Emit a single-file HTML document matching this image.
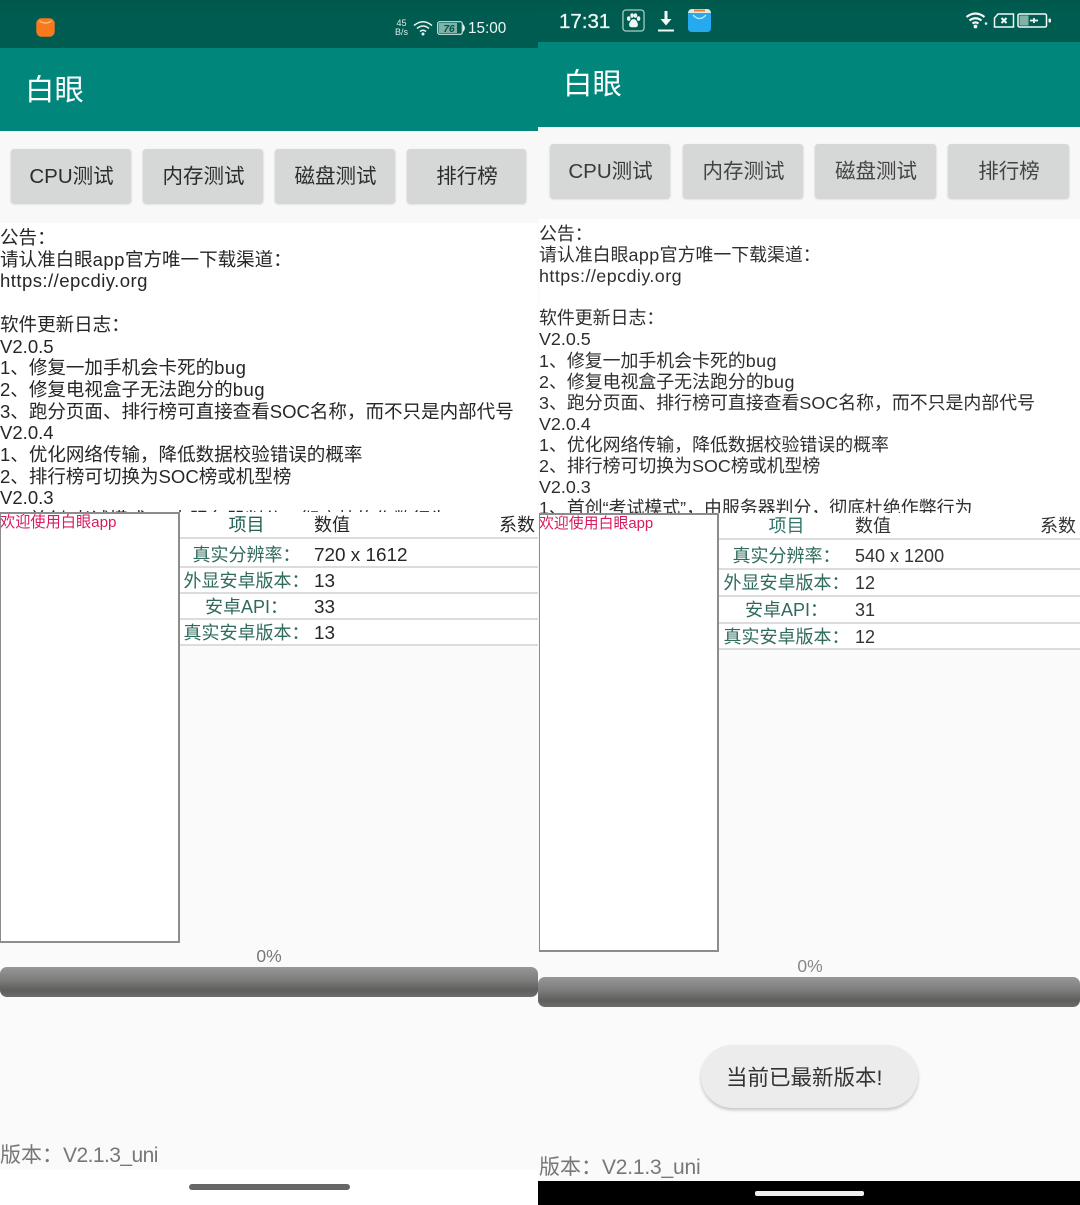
<!DOCTYPE html>
<html lang="zh">
<head>
<meta charset="utf-8">
<title>白眼</title>
<style>
html,body{margin:0;padding:0;width:1080px;height:1205px;overflow:hidden;background:#fafafa}
*{box-sizing:border-box}
body{position:relative;font-family:"Liberation Sans","Noto Sans CJK SC",sans-serif}
.a{position:absolute;white-space:nowrap}
.status{background:linear-gradient(#00584c,#005c50 30%,#005c50)}
.appbar{background:#00867a}
.title{color:#fff;font-size:29.500px;line-height:36px}
.btn{position:absolute;background:#d6d7d7;border-radius:3px;box-shadow:0 1px 2px rgba(0,0,0,.2);color:#2c2c2c;text-align:center;white-space:nowrap;height:54px;font-size:20.500px;line-height:56px;padding-left:1px}
.txt{position:absolute;overflow:hidden;background:#fff;color:#262626;white-space:pre}
.txt i{font-style:normal;letter-spacing:.45px}
.log{position:absolute;background:#fff;border:2px solid #8c8c8c;border-left-width:1px;color:#d81b60;overflow:hidden;white-space:nowrap;text-indent:-1px}
.rule{position:absolute;height:2px;background:#dcdcdc}
.rowbg{position:absolute;background:#fff}
.lab{position:absolute;text-align:center;color:#2f6a5d;white-space:nowrap;width:133px;font-size:18px;line-height:24px}
.val{position:absolute;color:#262626;white-space:nowrap;line-height:24px}
.prog{position:absolute;height:30px;border-radius:7px;background:linear-gradient(#979797 0,#7f7f7f 40%,#5d5f5c 78%,#6c6c6c 100%)}
.pct{position:absolute;color:#777;font-size:17.500px;line-height:20px;text-align:center}
.ver{position:absolute;color:#777;font-size:21px;line-height:28px;white-space:nowrap}
</style>
</head>
<body>

<!-- LEFT PHONE -->
<div class="a status" style="left:0;top:0;width:538px;height:48px"></div>
<div class="a appbar" style="left:0;top:48px;width:538px;height:83px"></div>
<svg class="a" style="left:36px;top:18px" width="19" height="19" viewBox="0 0 19 19"><rect x=".3" y=".3" width="18.400" height="18.400" rx="5" fill="#f97a1c"/><path d="M3.500 3q6 4 12 0" fill="none" stroke="#ffc48a" stroke-width="1.300"/></svg>
<div class="a" style="left:395px;top:19px;font-size:9px;line-height:9px;color:#dbeee9;text-align:center">45<br>B/s</div>
<svg class="a" style="left:413px;top:20px" width="20" height="16" viewBox="0 0 20 16" fill="none" stroke="#e6f4f0" stroke-width="1.500"><path d="M1 5.500q9-7.500 18 0M4 8.500q6-5 12 0M7 11.500q3-2.500 6 0"/><circle cx="10" cy="14" r="1.500" fill="#e6f4f0" stroke="none"/></svg>
<svg class="a" style="left:437px;top:21px" width="29" height="14" viewBox="0 0 29 14"><rect x=".7" y=".7" width="24.600" height="12.600" rx="2" fill="none" stroke="#cfe6e0" stroke-width="1.200"/><rect x="2" y="2" width="18" height="10" fill="#7fb3a8"/><path d="M26.500 4.500q1.800 2.500 0 5z" fill="#e6f4f0" stroke="#e6f4f0"/><text x="12" y="11" font-size="10" font-weight="bold" font-style="italic" fill="#004f44" text-anchor="middle" font-family="Liberation Sans">76</text></svg>
<div class="a" style="left:468px;top:19px;font-size:15.300px;line-height:19px;color:#eef7f5">15:00</div>
<div class="a title" style="left:25px;top:73px">白眼</div>

<div class="a" style="left:0;top:131px;width:538px;height:92px;background:#f8f8f8"></div>
<div class="btn" style="left:11px;top:149px;width:120px">CPU测试</div>
<div class="btn" style="left:143px;top:149px;width:120px">内存测试</div>
<div class="btn" style="left:275px;top:149px;width:120px">磁盘测试</div>
<div class="btn" style="left:407px;top:149px;width:119px">排行榜</div>

<div class="txt" style="left:0;top:223px;width:538px;height:289px;padding-top:4px;font-size:18.550px;line-height:21.700px">公告：
请认准白眼<i>app</i>官方唯一下载渠道：
<i>https://epcdiy.org</i>

软件更新日志：
V2.0.5
1、修复一加手机会卡死的<i>bug</i>
2、修复电视盒子无法跑分的<i>bug</i>
3、跑分页面、排行榜可直接查看SOC名称，而不只是内部代号
V2.0.4
1、优化网络传输，降低数据校验错误的概率
2、排行榜可切换为SOC榜或机型榜
V2.0.3
1、首创“考试模式”，由服务器判分，彻底杜绝作弊行为</div>

<div class="log" style="left:0;top:512px;width:180px;height:431px;font-size:15.200px;line-height:18px">欢迎使用白眼app</div>

<div class="rowbg" style="left:180px;top:512px;width:358px;height:133px"></div>
<div class="lab" style="left:180px;top:513px;color:#245f53">项目</div>
<div class="val" style="left:314px;top:513px;font-size:18px">数值</div>
<div class="val" style="left:499px;top:513px;font-size:18px">系数</div>
<div class="rule" style="left:180px;top:537px;width:358px"></div>
<div class="lab" style="left:180px;top:543px">真实分辨率：</div>
<div class="val" style="left:314px;top:544px;font-size:18.900px">720 x 1612</div>
<div class="rule" style="left:180px;top:566px;width:358px"></div>
<div class="lab" style="left:180px;top:569px">外显安卓版本：</div>
<div class="val" style="left:314px;top:570px;font-size:18.900px">13</div>
<div class="rule" style="left:180px;top:592px;width:358px"></div>
<div class="lab" style="left:180px;top:595px">安卓API：</div>
<div class="val" style="left:314px;top:596px;font-size:18.900px">33</div>
<div class="rule" style="left:180px;top:618px;width:358px"></div>
<div class="lab" style="left:180px;top:621px">真实安卓版本：</div>
<div class="val" style="left:314px;top:622px;font-size:18.900px">13</div>
<div class="rule" style="left:180px;top:644px;width:358px"></div>

<div class="pct" style="left:0;top:946px;width:538px">0%</div>
<div class="prog" style="left:0;top:967px;width:538px"></div>
<div class="ver" style="left:0;top:1142px">版本：<span style="letter-spacing:-.55px">V2.1.3_uni</span></div>
<div class="a" style="left:0;top:1170px;width:538px;height:35px;background:#fff"></div>
<div class="a" style="left:189px;top:1184px;width:161px;height:6px;border-radius:3px;background:#666"></div>

<!-- RIGHT PHONE -->
<div class="a status" style="left:538px;top:0;width:542px;height:42px"></div>
<div class="a appbar" style="left:538px;top:42px;width:542px;height:85px"></div>
<div class="a" style="left:559px;top:10px;font-size:20.500px;line-height:24px;color:#eef7f5;-webkit-text-stroke:.3px #eef7f5">17:31</div>
<svg class="a" style="left:622px;top:9px" width="23" height="23" viewBox="0 0 24 24"><rect x="1" y="1" width="22" height="22" rx="3" fill="none" stroke="#a9d0c8" stroke-width="1.300"/><g fill="#eef7f5"><ellipse cx="7" cy="10" rx="1.800" ry="2.400"/><ellipse cx="10.500" cy="6.800" rx="1.800" ry="2.400"/><ellipse cx="14" cy="6.800" rx="1.800" ry="2.400"/><ellipse cx="17.300" cy="10" rx="1.800" ry="2.400"/><path d="M12 10.500q3 0 4.500 5 .5 3.500-2.500 3.500h-4q-3 0-2.500-3.500 1.500-5 4.500-5z"/></g></svg>
<svg class="a" style="left:657px;top:10px" width="18" height="23" viewBox="0 0 18 23"><path d="M7.500 1h3v8h4l-5.500 6.500L3.500 9h4z" fill="#f2f9f7"/><rect x="1" y="19.500" width="16" height="2" fill="#f2f9f7"/></svg>
<svg class="a" style="left:687px;top:8px" width="25" height="25" viewBox="0 0 25 25"><path d="M5 1h15q4 0 4 4v15q0 4-4 4H5q-4 0-4-4V5q0-4 4-4z" fill="#25aaf0"/><path d="M5 1h15q3 0 4 4H1q1-4 4-4z" fill="#e9e5d8"/><path d="M7 1.500h11v2H7z" fill="#ee7a3a"/><path d="M6 7q6.500 7 13 0" fill="none" stroke="#bfe6fb" stroke-width="1.300"/></svg>
<svg class="a" style="left:965px;top:11px" width="24" height="18" viewBox="0 0 24 18" fill="none" stroke="#f2f9f7" stroke-width="2.200"><path d="M1.500 6q9-7 18 0M4.500 9.500q6-4.500 12 0M7.500 12.500q3-2.200 6 0"/><circle cx="10.500" cy="15.500" r="1.900" fill="#f2f9f7" stroke="none"/><circle cx="21" cy="12.500" r="1.300" fill="#f2f9f7" stroke="none"/></svg>
<svg class="a" style="left:993px;top:13px" width="22" height="15" viewBox="0 0 22 15"><path d="M5 1h15.500v13H1.500V5z" fill="none" stroke="#f2f9f7" stroke-width="1.500"/><path d="M8.500 5l5 5M13.500 5l-5 5" stroke="#f2f9f7" stroke-width="2"/></svg>
<svg class="a" style="left:1017px;top:13px" width="35" height="15" viewBox="0 0 35 15"><rect x="1" y="1" width="28.500" height="13" rx="1.500" fill="none" stroke="#f2f9f7" stroke-width="1.500"/><rect x="2.500" y="2.500" width="9" height="10" fill="#7fb3a8"/><path d="M13 7.500h8M17 5v5" stroke="#f2f9f7" stroke-width="1.700"/><rect x="31.500" y="5.500" width="2.500" height="4" rx="1" fill="#f2f9f7"/></svg>
<div class="a title" style="left:563px;top:67px">白眼</div>

<div class="a" style="left:538px;top:127px;width:542px;height:92px;background:#f8f8f8"></div>
<div class="btn" style="left:550px;top:144px;width:120px;color:#3a3a3a">CPU测试</div>
<div class="btn" style="left:683px;top:144px;width:120px;color:#444">内存测试</div>
<div class="btn" style="left:815px;top:144px;width:121px;color:#444">磁盘测试</div>
<div class="btn" style="left:948px;top:144px;width:121px;color:#444">排行榜</div>

<div class="txt" style="left:539px;top:219px;width:541px;height:294px;padding-top:5px;font-size:17.900px;line-height:21.100px;color:#2e2e2e">公告：
请认准白眼<i>app</i>官方唯一下载渠道：
<i>https://epcdiy.org</i>

软件更新日志：
V2.0.5
1、修复一加手机会卡死的<i>bug</i>
2、修复电视盒子无法跑分的<i>bug</i>
3、跑分页面、排行榜可直接查看SOC名称，而不只是内部代号
V2.0.4
1、优化网络传输，降低数据校验错误的概率
2、排行榜可切换为SOC榜或机型榜
V2.0.3
1、首创“考试模式”，由服务器判分，彻底杜绝作弊行为</div>

<div class="log" style="left:539px;top:513px;width:180px;height:439px;font-size:14.900px;line-height:18px">欢迎使用白眼app</div>

<div class="rowbg" style="left:719px;top:513px;width:361px;height:136px"></div>
<div class="lab" style="left:720px;top:514px;color:#2f7468">项目</div>
<div class="val" style="left:855px;top:514px;font-size:18px;color:#333">数值</div>
<div class="val" style="left:1040px;top:514px;font-size:18px;color:#333">系数</div>
<div class="rule" style="left:719px;top:538px;width:361px"></div>
<div class="lab" style="left:720px;top:544px">真实分辨率：</div>
<div class="val" style="left:855px;top:544px;font-size:18px;color:#333">540 x 1200</div>
<div class="rule" style="left:719px;top:568px;width:361px"></div>
<div class="lab" style="left:720px;top:571px">外显安卓版本：</div>
<div class="val" style="left:855px;top:571px;font-size:18px;color:#333">12</div>
<div class="rule" style="left:719px;top:595px;width:361px"></div>
<div class="lab" style="left:720px;top:598px">安卓API：</div>
<div class="val" style="left:855px;top:598px;font-size:18px;color:#333">31</div>
<div class="rule" style="left:719px;top:622px;width:361px"></div>
<div class="lab" style="left:720px;top:625px">真实安卓版本：</div>
<div class="val" style="left:855px;top:625px;font-size:18px;color:#333">12</div>
<div class="rule" style="left:719px;top:648px;width:361px"></div>

<div class="pct" style="left:539px;top:956px;width:542px;color:#888">0%</div>
<div class="prog" style="left:538px;top:977px;width:542px"></div>

<div class="a" style="left:701px;top:1045px;width:217px;height:63px;border-radius:32px;background:#ececec;box-shadow:0 2px 3px rgba(0,0,0,.22);font-size:21.500px;line-height:66px;color:#333;padding-left:25px">当前已最新版本!</div>

<div class="ver" style="left:539px;top:1154px">版本：<span style="letter-spacing:-.2px">V2.1.3_uni</span></div>
<div class="a" style="left:538px;top:1181px;width:542px;height:24px;background:#000"></div>
<div class="a" style="left:755px;top:1191px;width:109px;height:5px;border-radius:2px;background:#f0f0f0"></div>

</body>
</html>
